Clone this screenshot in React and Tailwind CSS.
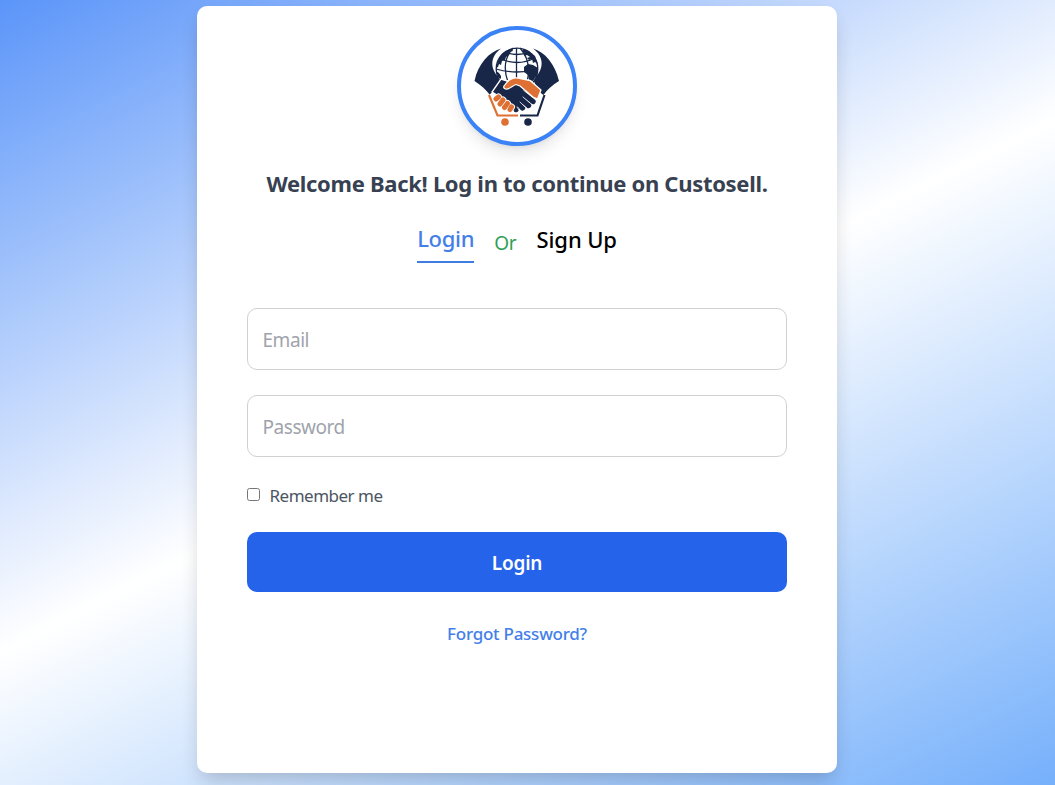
function Logo() {
  return (
    <svg viewBox="0 0 140 140" className="h-[140px] w-[140px] shrink-0" aria-hidden="true">
      <g fill="#182747">
        <path d="M54 32.500C42 36 31 48 27.500 65C34 69 39 74 42.500 78.500L47 75L54 63C43 55 42 41 54 32.500Z" />
        <path d="M86 32.500C98 36 108 48 112 65C105 69 100 74 96.500 79L91 75L86 63C97 55 98 41 86 32.500Z" />
      </g>
      <circle cx="70" cy="53" r="20.800" fill="#fff" stroke="#182747" strokeWidth="1.300" />
      <g fill="none" stroke="#182747" strokeWidth="1.300">
        <path d="M69.500 32V64M49 53Q70 59 91 53M52 42Q70 51 88 42M58 36Q70 41 82 36" />
        <path d="M66 32C57 42 57 55 61 66M73 32C82 42 83 54 80 66" />
      </g>
      <g fill="#182747">
        <path d="M52 42L56 37L61 34L65 33L66 35L63 36L62 39L59 41L58 44L55 45L54 49L52 48L51 51L49 52Z" />
        <path d="M76 33L82 35L88 40L91 48L88 46L86 47L85 43L82 44L80 42L83 41L80 39L77 40L78 37L75 36Z" />
        <path d="M77 51L81 48L86 49L91 52L90 59L86 65L82 64L81 59L77 56Z" />
        <path d="M49 55L52 57L54 60L54 64L51 61Z" />
      </g>
      <path d="M42 79L50.500 99.500H71" fill="none" stroke="#df7033" strokeWidth="2.200" />
      <path d="M97.500 79L90.500 99.500H73" fill="none" stroke="#182747" strokeWidth="2.200" />
      <path d="M54 63L60 65L68 63L84 77L88 83L83 91L76 94L67 95L58 84L45 76Z" fill="#182747" stroke="#fff" strokeWidth="1.400" />
      <g stroke="#fff" strokeWidth="7.200" strokeLinecap="round">
        <path d="M76 78L86 85.500M73 82L81.500 89.500M70 86L75.500 92M67 90L69 93.500" />
      </g>
      <g stroke="#182747" strokeWidth="5.400" strokeLinecap="round">
        <path d="M74 76L86 85.500M70 79L81.500 89.500M67 82L75.500 92M64 84L69 93.500" />
      </g>
      <g stroke="#fff" strokeWidth="0.800" strokeLinecap="round">
        <path d="M76 81L83 87M73 86L78 91M70 91L72 94" />
      </g>
      <g stroke="#fff" strokeWidth="7" strokeLinecap="round">
        <path d="M51.500 81L49 83M56 84L53 88M60.500 87.500L57.500 91.500M64.500 91L63 93.500" />
      </g>
      <g stroke="#df7033" strokeWidth="5" strokeLinecap="round">
        <path d="M51.500 81L49 83M56 84L53 88M60.500 87.500L57.500 91.500M64.500 91L63 93.500" />
      </g>
      <path d="M57 70C61 64 66 61 71 62L83 64.500L94 74L90.500 83L86 81L73 70L69 68.500C65 70 62 74 58.500 73Q56 72 57 70Z" fill="#df7033" stroke="#fff" strokeWidth="1.300" strokeLinejoin="round" />
      <circle cx="58" cy="106" r="3.800" fill="#df7033" />
      <circle cx="81" cy="106" r="3.800" fill="#182747" />
    </svg>
  );
}

export default function App() {
  return (
    <main className="flex h-[785px] justify-center overflow-hidden bg-[linear-gradient(153.2deg,#5b95f9_0%,#ffffff_49.5%,#76b0fb_100%)] pt-1.5 pr-[21px] font-['Noto_Sans',sans-serif]">
      <section className="flex h-[767px] w-[640px] flex-col items-center rounded-[10px] bg-white px-[50px] pt-5 shadow-[0_10px_20px_-4px_rgba(0,0,0,0.2)]">
        <div className="flex h-[120px] w-[120px] shrink-0 items-center justify-center overflow-hidden rounded-full border-4 border-[#3b82f6] bg-white shadow-[0_10px_15px_-3px_rgba(0,0,0,0.1),0_4px_6px_-4px_rgba(0,0,0,0.1)]">
          <Logo />
        </div>
        <h1 className="mt-[21px] text-[22px] leading-8 font-bold tracking-[-0.3px] whitespace-nowrap text-[#374151]">
          Welcome Back! Log in to continue on Custosell.
        </h1>
        <nav className="mt-6 flex h-10 items-start gap-5 whitespace-nowrap">
          <a className="h-10 border-b-2 border-[#3f7ee0] text-[22px] leading-[30px] font-medium tracking-[-0.3px] text-[#437fe8]">Login</a>
          <span className="pt-1 text-[19px] leading-8 tracking-[-0.2px] text-[#2f9e55]">Or</span>
          <a className="text-[22px] leading-8 font-medium tracking-[-0.1px] text-black">Sign Up</a>
        </nav>
        <form className="mt-[45px] flex w-full flex-col">
          <input type="email" placeholder="Email" className="h-[62px] rounded-[10px] border border-[#d1d1d4] pr-[15px] pl-[14.5px] pt-0.5 text-[19px] tracking-[-0.45px] placeholder:text-[#a0a3ac]" />
          <input type="password" placeholder="Password" className="mt-[25px] h-[62px] rounded-[10px] border border-[#d1d1d4] pr-[15px] pl-[14.5px] pt-0.5 text-[19px] tracking-[-0.45px] placeholder:text-[#a0a3ac]" />
          <label className="mt-[26px] flex h-6 items-center gap-[9.5px] text-[17px] tracking-[-0.5px] text-[#4b5563]">
            <input type="checkbox" className="mb-[1px] h-[13px] w-[13px]" />
            <span className="pt-0.5">Remember me</span>
          </label>
          <button type="button" className="mt-[25px] h-[60px] rounded-[10px] bg-[#2563eb] pt-[3px] text-[19px] font-semibold tracking-[-0.2px] text-white">Login</button>
        </form>
        <a className="mt-[30px] text-[17px] leading-6 font-medium tracking-[-0.25px] text-[#437fe8]">Forgot Password?</a>
      </section>
    </main>
  );
}
